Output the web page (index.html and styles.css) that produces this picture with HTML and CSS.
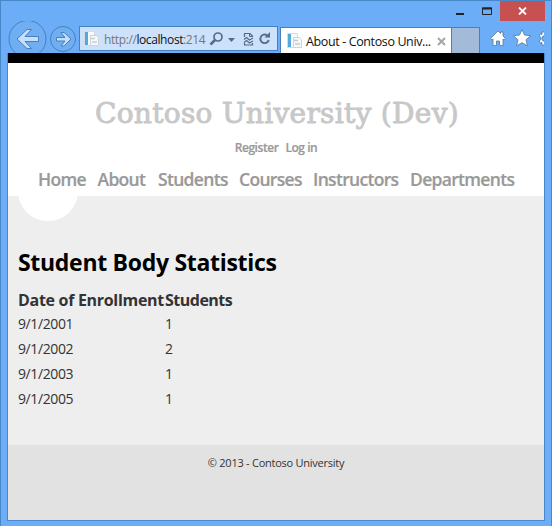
FILE: index.html
```html
<!DOCTYPE html>
<html lang="en">
<head>
<meta charset="utf-8">
<title>About - Contoso University</title>
<link rel="stylesheet" href="styles.css">
</head>
<body>
<div class="window">
  <header class="chrome">
    <div class="controls">
      <svg width="45" height="20" viewBox="0 0 45 20"><path d="M1 12h8v2H1z" fill="#222"/><path d="M27.500 7h9v6.500h-9z" fill="none" stroke="#222"/><path d="M27 7.500h10" stroke="#222" stroke-width="2"/></svg>
      <div class="close"><svg width="9" height="8" viewBox="0 0 9 8"><path d="M1 .5l7 7M8 .5l-7 7" stroke="#fff" stroke-width="1.800"/></svg></div>
    </div>
    <div class="toolbar">
      <svg class="history" width="70" height="32" viewBox="0 0 70 32">
        <g fill="#70aef4" stroke="#4b7fb9"><circle cx="19.500" cy="18" r="18.500"/><circle cx="55" cy="18" r="12.500"/></g>
        <g fill="#c5e0fc" stroke="#4b7fb9" stroke-linejoin="round"><path d="M9 18L19 8.500h4.500L17 15.500h13.500v5H17l6.500 7H19z"/><path d="M63 18l-7-6.500h-3l4 5h-8.500v3.500H57l-4 5h3z"/></g>
      </svg>
      <div class="address">
        <svg class="page-icon" width="18" height="18" viewBox="0 0 18 18"><path d="M1.500 1.500h10v14h-10z" fill="#f7f9fb" stroke="#d5dbe1"/><path d="M2 2h3v13H2z" fill="#55a8da"/><path d="M7.500 5.500h6l2 2v8h-8z" fill="#f7f8fa" stroke="#ccd3da"/><path d="M9 12h5M8 8.500h4" stroke="#c5ccd4" stroke-width="1.500"/></svg>
        <span class="url">http://<b>localhost</b>:214</span>
        <svg width="66" height="20" viewBox="0 0 66 20" fill="none" stroke="#566b84">
          <circle cx="10" cy="8" r="4" stroke-width="1.700"/><path d="M7 11l-4.500 4.500" stroke-width="2.500"/><path d="M20 9h7l-3.500 4z" fill="#566b84" stroke="none"/>
          <path d="M36.500 8V4.500h5.500l2.500 2.500V8M36.500 14v2h8v-2" stroke-width="1.200"/><path d="M36 10.500l2.500-2 3 2.500 3.500-2M36 13.500l2.500-2 3 2.500 3.500-2" stroke-width="1.200"/><path d="M41.500 4.500v3h3"/>
          <path d="M59 6.200A4.300 4.300 0 1 0 60.800 11" stroke-width="1.900"/><path d="M56.500 8.500H62V3z" fill="#566b84" stroke="none"/>
        </svg>
      </div>
      <div class="tab">
        <svg class="page-icon" width="18" height="18" viewBox="0 0 18 18"><path d="M1.500 1.500h10v14h-10z" fill="#f7f9fb" stroke="#d5dbe1"/><path d="M2 2h3v13H2z" fill="#55a8da"/><path d="M7.500 5.500h6l2 2v8h-8z" fill="#f7f8fa" stroke="#ccd3da"/><path d="M9 12h5M8 8.500h4" stroke="#c5ccd4" stroke-width="1.500"/></svg>
        <span class="tab-title">About - Contoso Univ...</span>
        <svg width="9" height="9" viewBox="0 0 9 9"><path d="M1 1l7 7M8 1L1 8" stroke="#a5a5a5" stroke-width="2"/></svg>
      </div>
      <div class="new-tab"></div>
      <svg class="tools" width="54" height="20" viewBox="0 0 54 20" fill="#fff" stroke="#50769f" stroke-width=".8" stroke-linejoin="round">
        <path d="M.5 9.500L8 2l2.500 2.500V3h2.500v4l2.500 2.500-1.500 1.200-1-.7v6.500H9.500V12h-3v4.500H3V10l-1 .7z"/>
        <path d="M32 .5l2.500 5.600 6.100.6-4.600 4.100 1.400 6L32 13.700l-5.400 3.100 1.400-6-4.600-4.100 6.100-.6z"/>
        <path d="M55 3h-3v2.500l-1.500-.5-1.500 2 2 1.500v2l-2 1.500 1.500 2 1.500-.5V16h3v-3.500a3 3 0 0 1 0-6z"/>
      </svg>
    </div>
  </header>
  <div class="page">
    <div class="masthead">
      <h1>Contoso University (Dev)</h1>
      <div class="login"><a>Register</a><a>Log in</a></div>
      <nav><a>Home</a><a>About</a><a>Students</a><a>Courses</a><a>Instructors</a><a>Departments</a></nav>
    </div>
    <main>
      <div class="bump"></div>
      <h2>Student Body Statistics</h2>
      <table>
        <tr><th class="date">Date of Enrollment</th><th>Students</th></tr>
        <tr><td>9/1/2001</td><td>1</td></tr>
        <tr><td>9/1/2002</td><td>2</td></tr>
        <tr><td>9/1/2003</td><td>1</td></tr>
        <tr><td>9/1/2005</td><td>1</td></tr>
      </table>
    </main>
    <footer><span>© 2013 - Contoso University</span></footer>
  </div>
</div>
</body>
</html>
```
FILE: styles.css
```css
* { box-sizing: border-box; }
body { margin: 0; font-family: "Open Sans", "Noto Sans", sans-serif; color: #333; overflow: hidden; }
svg { display: block; flex: none; }
.window { width: 552px; height: 526px; background: #6badf6; border: 1px solid #4a87c8; border-bottom: 0; padding: 0 6px; }
.chrome { height: 52px; display: flex; flex-direction: column; }
.controls { height: 20px; display: flex; justify-content: flex-end; }
.close { width: 45px; height: 20px; background: #c75050; display: flex; align-items: center; justify-content: center; }
.toolbar { height: 32px; display: flex; padding-left: 1px; overflow: hidden; }
.address { width: 199px; height: 25px; margin: 5px 0 0 1px; border: 1px solid #4a7fbd; background: #cce1fb; display: flex; align-items: center; padding-left: 3px; }
.url { width: 104px; margin: 1px 0 0 3px; font-size: 12px; letter-spacing: -.4px; color: #777; white-space: nowrap; }
.url b { font-weight: 400; color: #111; }
.tab { width: 172px; height: 27px; margin: 6px 0 0 2px; border: 1px solid #4a7fbd; border-bottom: 0; background: #fff; display: flex; align-items: center; padding-left: 5px; }
.tab-title { width: 127px; margin: 1px 4px 0 2px; font-size: 12.500px; letter-spacing: -.38px; color: #111; white-space: nowrap; }
.new-tab { width: 28px; height: 27px; margin-top: 6px; background: #a3bad9; border: 1px solid #4a7fbd; border-width: 1px 1px 0 0; }
.tools { margin: 8px 0 0 10px; }
.page { width: 538px; height: 468px; border: 1px solid #4b88ca; border-top: 0; background: #eee; }
.masthead { height: 143px; border-top: 10px solid #000; background: #fff; display: flex; flex-direction: column; align-items: center; }
h1 { margin: 32px 0 0 2px; font: 400 28px/38px "DejaVu Serif", serif; letter-spacing: .3px; color: #c8c8c8; -webkit-text-stroke: .9px #c8c8c8; white-space: nowrap; }
.login { margin-top: 5px; display: flex; gap: 7px; font-size: 12px; line-height: 20px; font-weight: 600; color: #999; letter-spacing: -.45px; -webkit-text-stroke: .2px #999; }
nav { margin-top: 7px; width: 476px; display: grid; grid-template-columns: 59.500px 60.500px 81px 74px 97px 104px; font-size: 17.500px; line-height: 28px; font-weight: 600; letter-spacing: -.68px; color: #999; white-space: nowrap; -webkit-text-stroke: .2px #999; }
main { height: 249px; padding-left: 10px; }
.bump { width: 60px; height: 25px; background: radial-gradient(circle at 30px -5px, #fff 29.500px, transparent 30.500px); }
h2 { margin: 24px 0 0; font-size: 23px; line-height: 34px; font-weight: 700; letter-spacing: -.3px; color: #000; }
table { margin-top: 9px; border-collapse: collapse; }
th, td { padding: 0; text-align: left; font-size: 14px; height: 25px; line-height: 25px; letter-spacing: -.4px; }
th { font-size: 16px; height: 23px; line-height: 21px; padding-top: 2px; letter-spacing: -.3px; white-space: nowrap; }
th + th { letter-spacing: -.5px; }
.date { width: 147px; min-width: 147px; max-width: 147px; }
footer { height: 75px; background: #e2e2e2; padding-top: 9px; text-align: center; font-size: 11px; line-height: 18px; letter-spacing: -.25px; }
```
